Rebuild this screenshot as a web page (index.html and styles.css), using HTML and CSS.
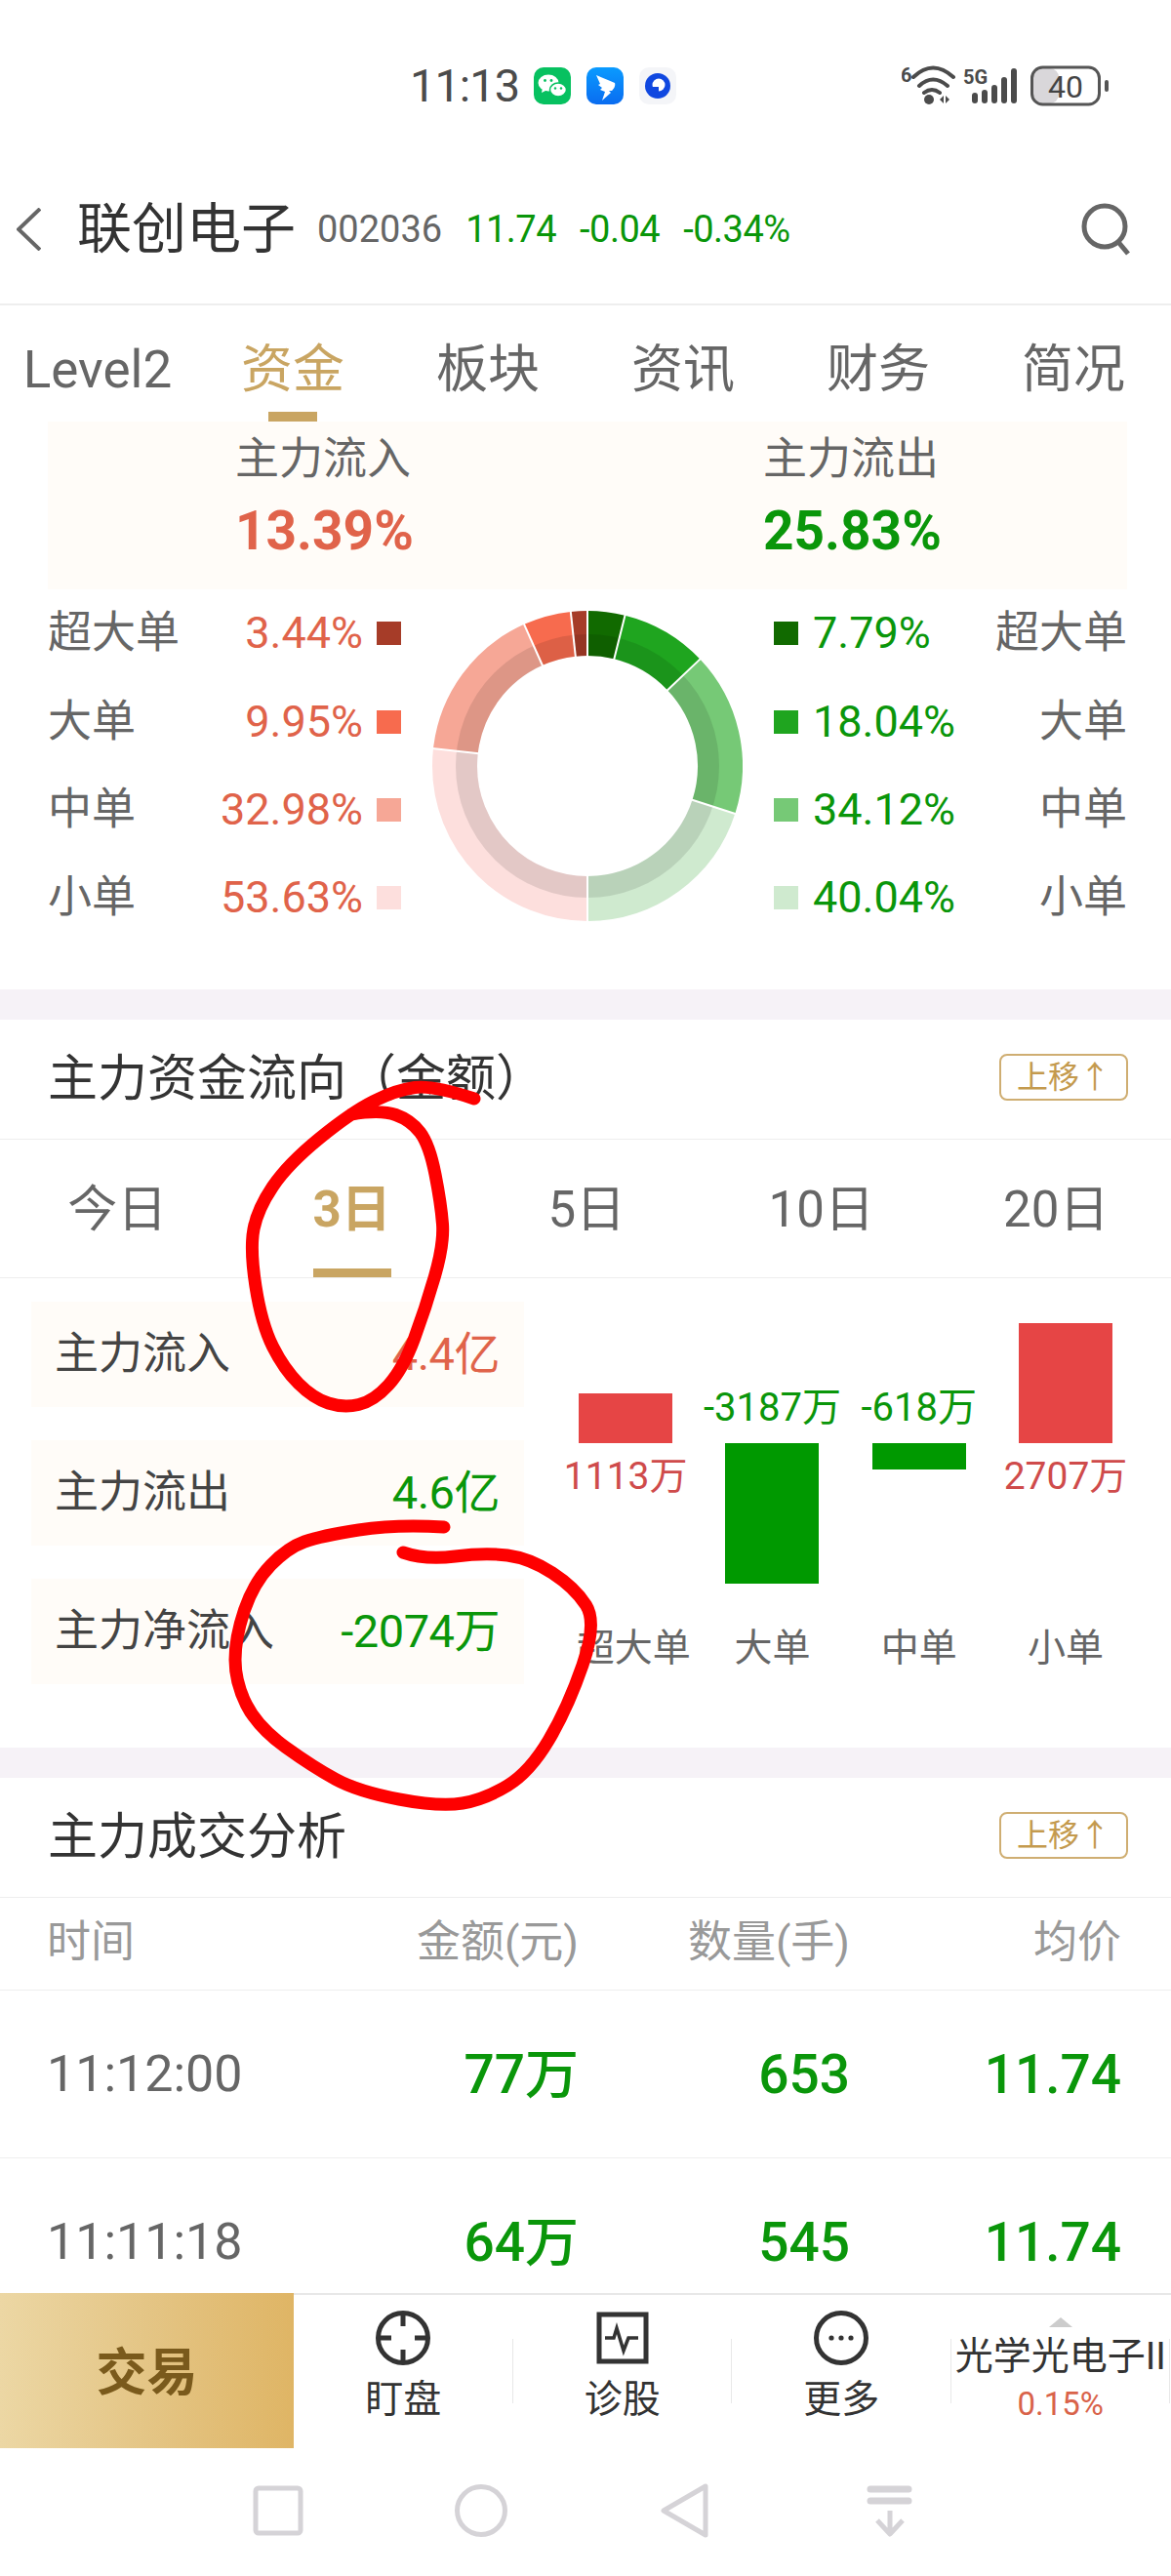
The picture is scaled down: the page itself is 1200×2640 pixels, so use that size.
FILE: index.html
```html
<!DOCTYPE html>
<html lang="zh-CN">
<head>
    <meta charset="UTF-8">
    <meta name="viewport" content="width=device-width, initial-scale=1.0">
    <title>联创电子</title>
    <link rel="stylesheet" href="styles.css">
</head>
<body>
    <div class="status-bar">
        <span class="clock">11:13</span>
        <svg class="app-icon" viewBox="0 0 38 38">
            <rect width="38" height="38" rx="10" fill="#07c160"/>
            <ellipse cx="15" cy="16" rx="10.5" ry="8.5" fill="#fff"/>
            <path d="M9 21l-1 5 6-3z" fill="#fff"/>
            <ellipse cx="25" cy="23" rx="8.5" ry="7" fill="#fff" stroke="#07c160" stroke-width="1.5"/>
            <circle cx="11.5" cy="13.5" r="1.4" fill="#07c160"/>
            <circle cx="18" cy="13.5" r="1.4" fill="#07c160"/>
            <circle cx="22" cy="21.5" r="1.2" fill="#07c160"/>
            <circle cx="28" cy="21.5" r="1.2" fill="#07c160"/>
        </svg>
        <svg class="app-icon" viewBox="0 0 38 38">
            <defs>
                <linearGradient id="dingBg" x1="0" y1="0" x2="0" y2="1">
                    <stop offset="0" stop-color="#0a9bff"/>
                    <stop offset="1" stop-color="#0a6cf0"/>
                </linearGradient>
            </defs>
            <rect width="38" height="38" rx="10" fill="url(#dingBg)"/>
            <path d="M10 8c6 3 13 5 19 8 1 3-1 6-3 8l-3 0 2 2-9 8 3-9-5-2 2-2-4-3 2-1z" fill="#fff"/>
        </svg>
        <svg class="app-icon" viewBox="0 0 38 38">
            <rect width="38" height="38" rx="10" fill="#f4f5f8"/>
            <circle cx="19" cy="19" r="13" fill="#1048e0"/>
            <circle cx="20" cy="18" r="6.5" fill="#fff"/>
            <path d="M13 20h7v8h-3z" fill="#1048e0"/>
        </svg>
        <svg class="signal-icons" viewBox="922 66 214 44">
            <text x="921" y="84" class="signal-text">6</text>
            <path d="M934 79Q954 60 975 79M940 88Q954 75 969 88M945 95Q953 89 961 95" class="wifi-arc"/>
            <circle cx="950" cy="102" r="5" fill="#4b4b4b"/>
            <path d="M961 102l4-4v8zM967 98l4 4-4 4z" fill="#4b4b4b"/>
            <text x="985" y="86" class="signal-text">5G</text>
            <rect x="994" y="95" width="6" height="11" rx="3" fill="#4b4b4b"/>
            <rect x="1004" y="92" width="6" height="14" rx="3" fill="#4b4b4b"/>
            <rect x="1014" y="87" width="6" height="19" rx="3" fill="#4b4b4b"/>
            <rect x="1024" y="79" width="6" height="27" rx="3" fill="#4b4b4b"/>
            <rect x="1034" y="70" width="6" height="36" rx="3" fill="#4b4b4b"/>
            <rect x="1056" y="70" width="27" height="36" rx="9" fill="#d9d7da"/>
            <rect x="1055.5" y="69" width="69" height="38" rx="11" fill="none" stroke="#555" stroke-width="3"/>
            <text x="1090" y="100" class="battery-text">40</text>
            <rect x="1130" y="82" width="4" height="12" rx="2" fill="#555"/>
        </svg>
    </div>

    <div class="header">
        <svg class="back-icon" viewBox="0 0 25 44"><path d="M24 1L2 22l22 21"/></svg>
        <span class="stock-name">联创电子</span>
        <span class="stock-code">002036</span>
        <span class="stock-quote">11.74</span>
        <span class="stock-quote">-0.04</span>
        <span class="stock-quote">-0.34%</span>
        <svg class="search-icon" viewBox="0 0 52 54"><circle cx="24" cy="24" r="21"/><path d="M38 40l10 12"/></svg>
    </div>

    <div class="content">
        <div class="main-tabs">
            <div class="main-tab">Level2</div>
            <div class="main-tab active">资金</div>
            <div class="main-tab">板块</div>
            <div class="main-tab">资讯</div>
            <div class="main-tab">财务</div>
            <div class="main-tab">简况</div>
        </div>

        <div class="summary">
            <div class="summary-col">
                <div class="summary-label">主力流入</div>
                <div class="summary-value red">13.39%</div>
            </div>
            <div class="summary-col">
                <div class="summary-label">主力流出</div>
                <div class="summary-value green">25.83%</div>
            </div>
        </div>

        <div class="legend">
            <div class="legend-col">
                <div class="legend-row"><span class="legend-label">超大单</span><span class="red">3.44%</span><i class="swatch r1"></i></div>
                <div class="legend-row"><span class="legend-label">大单</span><span class="red">9.95%</span><i class="swatch r2"></i></div>
                <div class="legend-row"><span class="legend-label">中单</span><span class="red">32.98%</span><i class="swatch r3"></i></div>
                <div class="legend-row"><span class="legend-label">小单</span><span class="red">53.63%</span><i class="swatch r4"></i></div>
            </div>
            <svg class="donut" viewBox="0 0 318 318">
                <g fill="none" stroke-width="46">
                    <circle cx="159" cy="159" r="136" pathLength="360" stroke-dasharray="14 360" transform="rotate(-90 159 159)" stroke="#116a00"/>
                    <circle cx="159" cy="159" r="136" pathLength="360" stroke-dasharray="32.5 360" transform="rotate(-76 159 159)" stroke="#1fa51f"/>
                    <circle cx="159" cy="159" r="136" pathLength="360" stroke-dasharray="61.4 360" transform="rotate(-43.5 159 159)" stroke="#76c976"/>
                    <circle cx="159" cy="159" r="136" pathLength="360" stroke-dasharray="72.1 360" transform="rotate(17.9 159 159)" stroke="#cfeacf"/>
                    <circle cx="159" cy="159" r="136" pathLength="360" stroke-dasharray="96.5 360" transform="rotate(90 159 159)" stroke="#fddfdd"/>
                    <circle cx="159" cy="159" r="136" pathLength="360" stroke-dasharray="59.4 360" transform="rotate(186.5 159 159)" stroke="#f6a796"/>
                    <circle cx="159" cy="159" r="136" pathLength="360" stroke-dasharray="17.9 360" transform="rotate(245.9 159 159)" stroke="#f76b4e"/>
                    <circle cx="159" cy="159" r="136" pathLength="360" stroke-dasharray="6.2 360" transform="rotate(263.8 159 159)" stroke="#a63c28"/>
                </g>
                <circle cx="159" cy="159" r="124" fill="none" stroke="#000" stroke-opacity="0.1" stroke-width="22"/>
                <g stroke="#fff" stroke-width="2">
                    <line x1="159" y1="47" x2="159" y2="-1"/>
                    <line x1="159" y1="47" x2="159" y2="-1" transform="rotate(14 159 159)"/>
                    <line x1="159" y1="47" x2="159" y2="-1" transform="rotate(46.5 159 159)"/>
                    <line x1="159" y1="47" x2="159" y2="-1" transform="rotate(107.9 159 159)"/>
                    <line x1="159" y1="47" x2="159" y2="-1" transform="rotate(180 159 159)"/>
                    <line x1="159" y1="47" x2="159" y2="-1" transform="rotate(276.5 159 159)"/>
                    <line x1="159" y1="47" x2="159" y2="-1" transform="rotate(335.9 159 159)"/>
                    <line x1="159" y1="47" x2="159" y2="-1" transform="rotate(353.8 159 159)"/>
                </g>
            </svg>
            <div class="legend-col">
                <div class="legend-row"><i class="swatch g1"></i><span class="green">7.79%</span><span class="legend-label right">超大单</span></div>
                <div class="legend-row"><i class="swatch g2"></i><span class="green">18.04%</span><span class="legend-label right">大单</span></div>
                <div class="legend-row"><i class="swatch g3"></i><span class="green">34.12%</span><span class="legend-label right">中单</span></div>
                <div class="legend-row"><i class="swatch g4"></i><span class="green">40.04%</span><span class="legend-label right">小单</span></div>
            </div>
        </div>

        <div class="band"></div>
        <div class="section-head">
            <span class="section-title">主力资金流向（金额）</span>
            <span class="move-up">上移↑</span>
        </div>
        <div class="period-tabs">
            <div class="period-tab">今日</div>
            <div class="period-tab active">3日</div>
            <div class="period-tab">5日</div>
            <div class="period-tab">10日</div>
            <div class="period-tab">20日</div>
        </div>

        <div class="flow">
            <div class="flow-cards">
                <div class="flow-card"><span>主力流入</span><span class="flow-value red">4.4亿</span></div>
                <div class="flow-card"><span>主力流出</span><span class="flow-value green">4.6亿</span></div>
                <div class="flow-card"><span>主力净流入</span><span class="flow-value green">-2074万</span></div>
            </div>
            <div class="chart">
                <div class="chart-col">
                    <div class="chart-up"><div class="bar bar-red" style="height:51px"></div></div>
                    <div class="chart-down"><div class="bar-value bar-value-red">1113万</div></div>
                    <div class="axis-label axis-shift">超大单</div>
                </div>
                <div class="chart-col">
                    <div class="chart-up"><div class="bar-value bar-value-green">-3187万</div></div>
                    <div class="chart-down"><div class="bar bar-green" style="height:144px"></div></div>
                    <div class="axis-label">大单</div>
                </div>
                <div class="chart-col">
                    <div class="chart-up"><div class="bar-value bar-value-green">-618万</div></div>
                    <div class="chart-down"><div class="bar bar-green" style="height:27px"></div></div>
                    <div class="axis-label">中单</div>
                </div>
                <div class="chart-col">
                    <div class="chart-up"><div class="bar bar-red" style="height:123px"></div></div>
                    <div class="chart-down"><div class="bar-value bar-value-red">2707万</div></div>
                    <div class="axis-label">小单</div>
                </div>
            </div>
        </div>

        <div class="band"></div>
        <div class="section-head">
            <span class="section-title">主力成交分析</span>
            <span class="move-up">上移↑</span>
        </div>
        <div class="deal-row deal-head">
            <span>时间</span><span>金额(元)</span><span>数量(手)</span><span>均价</span>
        </div>
        <div class="deal-row">
            <span class="deal-time">11:12:00</span><span class="deal-num">77万</span><span class="deal-num">653</span><span class="deal-num">11.74</span>
        </div>
        <div class="deal-row">
            <span class="deal-time">11:11:18</span><span class="deal-num">64万</span><span class="deal-num">545</span><span class="deal-num">11.74</span>
        </div>
    </div>

    <div class="tool-bar">
        <div class="trade-btn">交易</div>
        <div class="tool-item">
            <svg class="tool-icon" viewBox="0 0 56 56">
                <circle cx="28" cy="28" r="25.5"/>
                <path d="M28 3v13M28 40v13M3 28h13M40 28h13"/>
            </svg>
            <span class="tool-text">盯盘</span>
        </div>
        <div class="tool-item">
            <svg class="tool-icon" viewBox="0 0 56 56">
                <rect x="4" y="4" width="48" height="48"/>
                <path class="thin" d="M10 28h9l3-10 7 23 5-13h10"/>
            </svg>
            <span class="tool-text">诊股</span>
        </div>
        <div class="tool-item">
            <svg class="tool-icon" viewBox="0 0 56 56">
                <circle cx="28" cy="28" r="25.5"/>
                <circle class="dot" cx="18" cy="28" r="2.6"/>
                <circle class="dot" cx="28" cy="28" r="2.6"/>
                <circle class="dot" cx="38" cy="28" r="2.6"/>
            </svg>
            <span class="tool-text">更多</span>
        </div>
        <div class="tool-item tool-sector">
            <i class="sector-arrow"></i>
            <span class="sector-name">光学光电子II</span>
            <span class="sector-pct">0.15%</span>
        </div>
    </div>

    <div class="nav-bar">
        <svg class="nav-icon" viewBox="0 0 56 56"><rect x="5" y="5" width="46" height="46" rx="3"/></svg>
        <svg class="nav-icon" viewBox="0 0 56 56"><circle cx="28" cy="28" r="24.5"/></svg>
        <svg class="nav-icon" viewBox="0 0 56 56"><path d="M50 3v50L7 28z"/></svg>
        <svg class="nav-icon" viewBox="0 0 56 56"><path class="nav-fat" d="M11 6h39M11 18h39"/><path d="M31 28v24M18 38l13 14 13-14"/></svg>
    </div>

    <svg class="scribble" viewBox="0 0 1200 2640">
        <path d="M486 1126Q444 1112 425 1114.5Q406 1117 383 1128.5Q360 1140 327.5 1166.5Q295 1193 279.5 1216Q264 1239 260 1259.5Q256 1280 262 1318.5Q268 1357 279.5 1380Q291 1403 306 1418Q321 1433 336.5 1438Q352 1443 367.5 1439.5Q383 1436 398 1419.5Q413 1403 424.5 1372Q436 1341 445.5 1308Q455 1275 453.5 1254.5Q452 1234 446 1203.5Q440 1173 430.5 1160.5Q421 1148 405.5 1142.5Q390 1137 360 1142"/>
        <path d="M455 1565Q406 1562 367.5 1568Q329 1574 312 1580Q295 1586 277.5 1604Q260 1622 250.5 1650Q241 1678 241 1701Q241 1724 252.5 1747Q264 1770 292.5 1790.5Q321 1811 344 1823.5Q367 1836 409 1844Q451 1852 474 1848Q497 1844 520 1830Q543 1816 562.5 1783Q582 1750 597 1706.5Q612 1663 600.5 1645Q589 1627 566 1612Q543 1597 520 1594Q497 1591 466.5 1595Q436 1599 413 1591"/>
    </svg>
</body>
</html>
```

FILE: styles.css
```css
/* Global */
* {
    box-sizing: border-box;
}

body {
    position: relative;
    display: flex;
    flex-direction: column;
    width: 1200px;
    height: 2640px;
    margin: 0;
    overflow: hidden;
    background-color: #fff;
    color: #666;
    font-family: Roboto, "Noto Sans CJK SC", sans-serif;
}

.red {
    color: #e0634a;
}

.green {
    color: #0a960a;
}

/* Status bar */
.status-bar {
    display: flex;
    align-items: center;
    flex: none;
    height: 176px;
    padding: 0 62px 0 420px;
}

.clock {
    width: 113px;
    margin-right: 14px;
    color: #4b4b4b;
    font-size: 47px;
    letter-spacing: -1px;
    line-height: 48px;
    white-space: nowrap;
}

.app-icon {
    width: 38px;
    height: 38px;
    margin-right: 16px;
}

.signal-icons {
    width: 214px;
    height: 44px;
    margin-left: auto;
}

.signal-text {
    fill: #4b4b4b;
    font-size: 20px;
    font-weight: 700;
}

.battery-text {
    fill: #444;
    font-size: 32px;
    text-anchor: middle;
}

.wifi-arc {
    fill: none;
    stroke: #4b4b4b;
    stroke-width: 4;
    stroke-linecap: round;
}

/* Header */
.header {
    display: flex;
    align-items: center;
    flex: none;
    height: 137px;
    padding: 0 40px 18px 17px;
    border-bottom: 2px solid #eee;
}

.back-icon {
    width: 25px;
    height: 44px;
    fill: none;
    stroke: #666;
    stroke-width: 4;
}

.stock-name {
    margin: 0 22px 0 37px;
    color: #333;
    font-size: 56px;
    line-height: 64px;
}

.stock-code {
    margin-right: 24px;
    font-size: 38px;
    line-height: 44px;
}

.stock-quote {
    margin-right: 24px;
    color: #0a960a;
    font-size: 38px;
    letter-spacing: -0.5px;
    line-height: 44px;
}

.search-icon {
    width: 52px;
    height: 54px;
    margin-left: auto;
    fill: none;
    stroke: #666;
    stroke-width: 5;
}

/* Top tabs */
.content {
    flex: 1;
    min-height: 0;
    overflow: hidden;
}

.main-tabs {
    display: grid;
    grid-template-columns: repeat(6, 200px);
    height: 119px;
}

.main-tab {
    display: flex;
    flex-direction: column;
    align-items: center;
    padding-top: 36px;
    font-size: 53px;
    line-height: 60px;
}

.main-tab.active {
    color: #c9a562;
}

.main-tab.active::after {
    content: "";
    width: 50px;
    height: 10px;
    margin-top: auto;
    background-color: #c9a562;
}

/* Summary */
.summary {
    display: grid;
    grid-template-columns: 541px 1fr;
    height: 172px;
    margin: 0 45px 0 49px;
    padding: 17px 0 0 192px;
    background-color: #fffcf8;
}

.summary-label {
    font-size: 45px;
    line-height: 44px;
}

.summary-value {
    margin-top: 24px;
    font-size: 55px;
    font-weight: 700;
    line-height: 54px;
}

/* Legend and donut */
.legend {
    display: flex;
    justify-content: space-between;
    height: 410px;
    padding: 0 45px 0 49px;
}

.legend-col {
    width: 362px;
}

.legend-row {
    display: flex;
    align-items: center;
    height: 90.4px;
    font-size: 45px;
    line-height: 50px;
}

.legend-label {
    flex: 1;
}

.legend-label.right {
    text-align: right;
}

.swatch {
    flex: none;
    width: 25px;
    height: 24px;
}

.legend-label + span + .swatch {
    margin-left: 14px;
}

.swatch + span {
    margin-left: 15px;
}

.r1 { background-color: #a63c28; }
.r2 { background-color: #f76b4e; }
.r3 { background-color: #f6a796; }
.r4 { background-color: #fddfdd; }
.g1 { background-color: #116a00; }
.g2 { background-color: #1fa51f; }
.g3 { background-color: #76c976; }
.g4 { background-color: #cfeacf; }

.donut {
    flex: none;
    width: 318px;
    height: 318px;
    margin-top: 22px;
}

/* Sections */
.band {
    height: 31px;
    background-color: #f6f2f7;
}

.section-head {
    display: flex;
    align-items: center;
    justify-content: space-between;
    height: 123px;
    padding: 0 44px 0 49px;
    border-bottom: 1px solid #eee;
}

.section-title {
    color: #333;
    font-size: 51px;
    line-height: 60px;
}

.move-up {
    width: 132px;
    height: 48px;
    margin-bottom: 4px;
    border: 2px solid #cfae72;
    border-radius: 8px;
    color: #c49a4e;
    font-size: 32px;
    line-height: 44px;
    text-align: center;
}

.period-tabs {
    display: grid;
    grid-template-columns: repeat(5, 240.5px);
    height: 142px;
    border-bottom: 1px solid #eee;
}

.period-tab {
    display: flex;
    flex-direction: column;
    align-items: center;
    padding-top: 47px;
    font-size: 51px;
    line-height: 50px;
}

.period-tab.active {
    color: #c9a562;
    font-weight: 700;
}

.period-tab.active::after {
    content: "";
    width: 80px;
    height: 9px;
    margin-top: auto;
    background-color: #c9a562;
}

/* Money flow */
.flow {
    display: flex;
    height: 481px;
    padding: 24px 33px 0 32px;
}

.flow-cards {
    display: flex;
    flex-direction: column;
    flex: none;
    gap: 34px;
    width: 505px;
}

.flow-card {
    display: flex;
    align-items: center;
    justify-content: space-between;
    height: 108px;
    padding: 0 25px 0 24px;
    background-color: #fffcf8;
    color: #444;
    font-size: 45px;
    line-height: 50px;
}

.flow-value {
    font-size: 47px;
    letter-spacing: -0.5px;
}

.chart {
    display: grid;
    grid-template-columns: repeat(4, 150.3px);
    margin-left: 29px;
}

.chart-col {
    display: flex;
    flex-direction: column;
    align-items: center;
}

.chart-up {
    display: flex;
    flex-direction: column;
    justify-content: flex-end;
    align-items: center;
    width: 100%;
    height: 145px;
}

.chart-down {
    display: flex;
    flex-direction: column;
    align-items: center;
    width: 100%;
    height: 191px;
}

.bar {
    width: 96px;
}

.bar-red {
    background-color: #e64545;
}

.bar-green {
    background-color: #009900;
}

.bar-value {
    font-size: 39px;
    line-height: 38px;
    white-space: nowrap;
}

.bar-value-red {
    margin-top: 15px;
    color: #cf4b4b;
}

.bar-value-green {
    margin-bottom: 17px;
    color: #0a960a;
    font-size: 40px;
}

.axis-label {
    font-size: 39px;
    line-height: 38px;
}

.axis-shift {
    padding-left: 16px;
}

/* Deals table */
.deal-row {
    display: grid;
    grid-template-columns: 267px 278px 278px 278px;
    align-items: center;
    height: 172px;
    padding-left: 48px;
    border-bottom: 1px solid #eee;
    line-height: 60px;
}

.deal-row span + span {
    text-align: right;
}

.deal-head {
    height: 95px;
    padding-bottom: 2px;
    color: #999;
    font-size: 45px;
}

.deal-time {
    font-size: 52px;
}

.deal-num {
    color: #0a960a;
    font-size: 55px;
    font-weight: 500;
}

/* Bottom tool bar */
.tool-bar {
    display: flex;
    flex: none;
    height: 159px;
    border-top: 2px solid #e8e8e8;
}

.trade-btn {
    flex: none;
    width: 301px;
    margin-top: -2px;
    padding-top: 3px;
    background: linear-gradient(90deg, #ecd7a4, #e4c585 50%, #dfb565);
    color: #7a5a1c;
    font-size: 52px;
    font-weight: 700;
    line-height: 159px;
    text-align: center;
}

.tool-item {
    position: relative;
    display: flex;
    flex-direction: column;
    align-items: center;
    width: 224.5px;
    padding-top: 16px;
}

.tool-item::after {
    content: "";
    position: absolute;
    top: 45px;
    right: 0;
    width: 1px;
    height: 66px;
    background-color: #e8e8e8;
}

.tool-icon {
    width: 56px;
    height: 56px;
    fill: none;
    stroke: #333;
    stroke-width: 5;
}

.tool-icon .thin {
    stroke-width: 3.5;
}

.tool-icon .dot {
    fill: #333;
    stroke: none;
}

.tool-text {
    margin-top: 16px;
    color: #333;
    font-size: 39px;
    line-height: 38px;
}

.tool-sector {
    padding-top: 23px;
}

.sector-arrow {
    width: 0;
    height: 0;
    border-right: 12px solid transparent;
    border-bottom: 10px solid #ccc;
    border-left: 12px solid transparent;
}

.sector-name {
    margin-top: 11px;
    color: #333;
    font-size: 39px;
    line-height: 38px;
    white-space: nowrap;
}

.sector-pct {
    margin-top: 14px;
    color: #d9634a;
    font-size: 33px;
    line-height: 32px;
}

/* System nav bar */
.nav-bar {
    display: flex;
    flex: none;
    gap: 152px;
    height: 131px;
    padding: 36px 0 0 257px;
}

.nav-icon {
    width: 56px;
    height: 56px;
    fill: none;
    stroke: #d5d3d7;
    stroke-width: 5;
    stroke-linejoin: round;
}

.nav-fat {
    stroke-width: 7;
    stroke-linecap: round;
}

/* Red marker drawn over the screenshot */
.scribble {
    position: absolute;
    top: 0;
    left: 0;
    width: 1200px;
    height: 2640px;
    fill: none;
    stroke: #fe0000;
    stroke-width: 13;
    stroke-linecap: round;
    stroke-linejoin: round;
    pointer-events: none;
}
```
